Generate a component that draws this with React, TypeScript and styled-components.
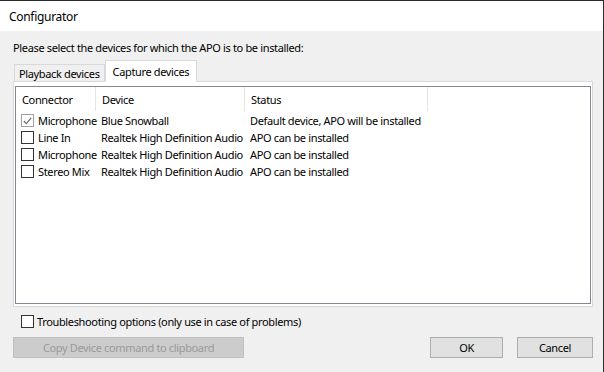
import React from 'react';
import styled, { createGlobalStyle } from 'styled-components';

const GlobalStyle = createGlobalStyle`
  html, body {
    margin: 0;
    padding: 0;
    background: #f0f0f0;
  }
  body {
    font-family: 'Noto Sans', 'Open Sans', sans-serif;
    font-size: 11px;
    letter-spacing: -0.35px;
    color: #000;
  }
`;

const Window = styled.div`
  width: 604px;
  height: 372px;
  box-sizing: border-box;
  border-top: 1px solid #2b2b2b;
  border-right: 1px solid #2b2b2b;
  background: #f0f0f0;
  display: flex;
  flex-direction: column;
  overflow: hidden;
`;

const TitleBar = styled.div`
  height: 30px;
  background: #fff;
  display: flex;
  align-items: center;
  padding-left: 9px;
  font-size: 12px;
  letter-spacing: -0.3px;
`;

const Body = styled.div`
  flex: 1;
  display: flex;
  flex-direction: column;
  padding: 9px 10px 0 13px;
`;

const Prompt = styled.div`
  height: 15px;
  line-height: 15px;
`;

const TabStrip = styled.div`
  display: flex;
  align-items: flex-end;
  height: 21px;
  margin-top: 5px;
  padding-left: 1px;
  position: relative;
  z-index: 1;
`;

const Tab = styled.div<{ $active?: boolean }>`
  box-sizing: border-box;
  height: ${(p) => (p.$active ? '22px' : '17px')};
  padding: 0 ${(p) => (p.$active ? '7px' : '4px')};
  display: flex;
  align-items: center;
  border: 1px solid #d9d9d9;
  border-bottom: ${(p) => (p.$active ? '1px solid #fff' : 'none')};
  background: ${(p) => (p.$active ? '#fff' : '#f0f0f0')};
  margin-bottom: ${(p) => (p.$active ? '-1px' : '0')};
`;

const Panel = styled.div`
  box-sizing: border-box;
  height: 226px;
  width: 580px;
  border: 1px solid #d9d9d9;
  background: #fff;
  padding: 4px 1px 2px 1px;
  display: flex;
`;

const List = styled.div`
  flex: 1;
  border: 1px solid #828790;
  background: #fff;
`;

const columns = '80px 149px 183px';

const HeaderRow = styled.div`
  display: grid;
  grid-template-columns: ${columns};
  height: 24px;
  margin-bottom: 1px;
`;

const HeaderCell = styled.div`
  display: flex;
  align-items: center;
  padding-left: 6px;
  border-right: 1px solid #e5e5e5;
`;

const Row = styled.div`
  display: grid;
  grid-template-columns: ${columns};
  height: 17px;
  align-items: center;
  white-space: nowrap;
`;

const Cell = styled.div`
  display: flex;
  align-items: center;
  padding-left: 5px;
`;

const FirstCell = styled(Cell)`
  gap: 4px;
`;

const Box = styled.span<{ $muted?: boolean }>`
  box-sizing: border-box;
  width: 13px;
  height: 13px;
  flex: none;
  border: 1px solid ${(p) => (p.$muted ? '#a0a0a0' : '#333')};
  background: #fff;
  display: inline-flex;
  align-items: center;
  justify-content: center;
`;

const Options = styled.label`
  display: flex;
  align-items: center;
  gap: 3px;
  margin-top: 8px;
  padding-left: 8px;
  height: 13px;
`;

const Footer = styled.div`
  display: flex;
  align-items: center;
  margin-top: 9px;
`;

const Button = styled.div<{ $width: number; $disabled?: boolean }>`
  box-sizing: border-box;
  width: ${(p) => p.$width}px;
  height: 21px;
  display: flex;
  align-items: center;
  justify-content: center;
  background: ${(p) => (p.$disabled ? '#cccccc' : '#e1e1e1')};
  border: 1px solid ${(p) => (p.$disabled ? '#bfbfbf' : '#adadad')};
  color: ${(p) => (p.$disabled ? '#9a9a9a' : '#000')};
`;

const Spacer = styled.div`
  flex: 1;
`;

const Gap = styled.div<{ $w: number }>`
  width: ${(p) => p.$w}px;
`;

const Check = ({ muted }: { muted?: boolean }) => (
  <svg width="9" height="8" viewBox="0 0 9 8">
    <path d="M0.8 4 L3.3 6.6 L8.2 0.8" fill="none" stroke={muted ? '#6d6d6d' : '#333'} strokeWidth="1.2" />
  </svg>
);

const rows = [
  { connector: 'Microphone', device: 'Blue Snowball', status: 'Default device, APO will be installed', checked: true },
  { connector: 'Line In', device: 'Realtek High Definition Audio', status: 'APO can be installed' },
  { connector: 'Microphone', device: 'Realtek High Definition Audio', status: 'APO can be installed' },
  { connector: 'Stereo Mix', device: 'Realtek High Definition Audio', status: 'APO can be installed' },
];

export default function App() {
  return (
    <>
      <GlobalStyle />
      <Window>
        <TitleBar>Configurator</TitleBar>
        <Body>
          <Prompt>Please select the devices for which the APO is to be installed:</Prompt>
          <TabStrip>
            <Tab>Playback devices</Tab>
            <Tab $active>Capture devices</Tab>
          </TabStrip>
          <Panel>
            <List>
              <HeaderRow>
                <HeaderCell>Connector</HeaderCell>
                <HeaderCell>Device</HeaderCell>
                <HeaderCell>Status</HeaderCell>
              </HeaderRow>
              {rows.map((r, i) => (
                <Row key={i}>
                  <FirstCell>
                    <Box $muted={r.checked}>{r.checked && <Check muted />}</Box>
                    {r.connector}
                  </FirstCell>
                  <Cell>{r.device}</Cell>
                  <Cell>{r.status}</Cell>
                </Row>
              ))}
            </List>
          </Panel>
          <Options>
            <Box />
            Troubleshooting options (only use in case of problems)
          </Options>
          <Footer>
            <Button $width={231} $disabled>Copy Device command to clipboard</Button>
            <Spacer />
            <Button $width={73}>OK</Button>
            <Gap $w={14} />
            <Button $width={76}>Cancel</Button>
          </Footer>
        </Body>
      </Window>
    </>
  );
}
